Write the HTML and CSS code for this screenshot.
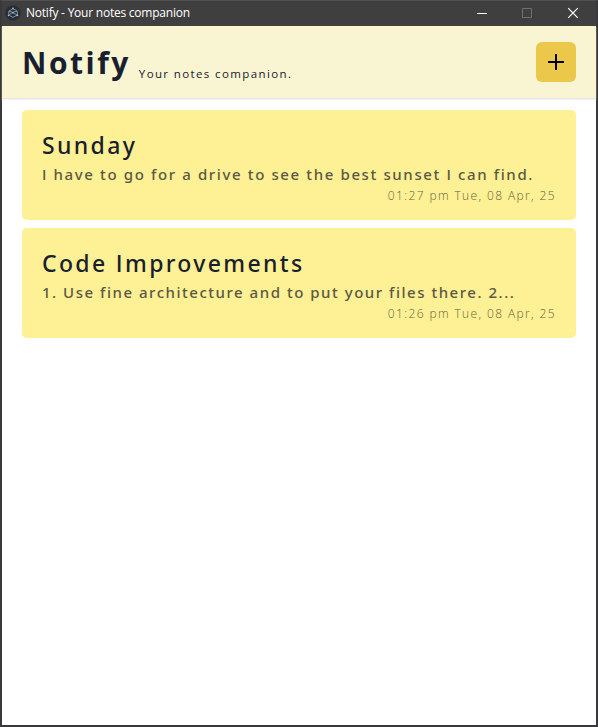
FILE: index.html
```html
<!DOCTYPE html>
<html lang="en">
<head>
<meta charset="utf-8">
<title>Notify - Your notes companion</title>
<link rel="stylesheet" href="styles.css">
</head>
<body>
<div class="window">
  <div class="titlebar">
    <svg class="app-icon" width="16" height="16" viewBox="0 0 16 16">
      <circle cx="8" cy="8" r="7.8" fill="#2b2e3a"/>
      <g fill="none" stroke="#8aa9b5" stroke-width=".8">
        <path d="M3.700 9.200V6.200L8 3.600l4.300 2.600v3.600L8 12.400l-3-1.700"/>
        <path d="M4 6.300c3 .2 5.800 1.800 7.900 4.100M12 6.200C9 6.400 6 8 4 10.200"/>
      </g>
      <g fill="#a9c8d2">
        <circle cx="8" cy="8" r=".8"/>
        <circle cx="3.700" cy="10.300" r=".9"/>
        <circle cx="12.300" cy="10.300" r=".9"/>
        <circle cx="8" cy="3.400" r=".8"/>
      </g>
    </svg>
    <span class="caption">Notify - Your notes companion</span>
    <div class="controls">
      <svg width="45" height="24" viewBox="0 0 45 24"><path d="M17 12.500h10" stroke="#fff"/></svg>
      <svg width="45" height="24" viewBox="0 0 45 24"><path d="M17.500 7.500h9v9h-9z" fill="none" stroke="#6e6e6e"/></svg>
      <svg width="45" height="24" viewBox="0 0 45 24"><path d="M18.200 7.200l9.600 9.600M27.800 7.200l-9.600 9.600" stroke="#fff" stroke-width="1.200"/></svg>
    </div>
  </div>
  <header class="header">
    <div class="brand">
      <h1 class="logo">Notify</h1>
      <p class="tagline">Your notes companion.</p>
    </div>
    <button class="add" aria-label="Add note">
      <svg width="16" height="16" viewBox="0 0 16 16"><path d="M0 8h16M8 0v16" stroke="#000" stroke-width="2"/></svg>
    </button>
  </header>
  <main class="notes">
    <article class="note">
      <h2 class="title">Sunday</h2>
      <p class="text wide">I have to go for a drive to see the best sunset I can find.</p>
      <time class="date">01:27 pm Tue, 08 Apr, 25</time>
    </article>
    <article class="note">
      <h2 class="title">Code Improvements</h2>
      <p class="text">1. Use fine architecture and to put your files there. 2...</p>
      <time class="date">01:26 pm Tue, 08 Apr, 25</time>
    </article>
  </main>
</div>
</body>
</html>
```
FILE: styles.css
```css
* { box-sizing: border-box; margin: 0; padding: 0; }
body {
  height: 727px;
  overflow: hidden;
  background: #fff;
  font-family: "Open Sans", "Noto Sans", sans-serif;
  color: #18202e;
}
.window {
  height: 727px;
  border: solid #39393b;
  border-width: 1px 2px 2px;
  border-top-color: #515151;
}
.titlebar {
  display: flex;
  height: 25px;
  padding-left: 3px;
  background: #3f3f3f;
  color: #fff;
}
.app-icon { margin-top: 4px; }
.caption {
  margin-left: 5px;
  font-size: 12px;
  line-height: 24px;
  letter-spacing: -0.23px;
  white-space: nowrap;
}
.controls { display: flex; margin: 0 1px 0 auto; }
.header {
  display: flex;
  align-items: center;
  justify-content: space-between;
  height: 73px;
  padding: 0 20px;
  background: #f9f5d3;
  border-bottom: 1px solid #e5e4e8;
  box-shadow: 0 1px 1px #f3f3f6;
}
.brand { display: flex; align-items: flex-end; gap: 8px; padding-top: 1px; white-space: nowrap; }
.logo { font-size: 30px; line-height: 36px; font-weight: 700; letter-spacing: 2.5px; }
.tagline { font-size: 11.5px; line-height: 14px; letter-spacing: 1.38px; }
.add {
  display: grid;
  place-items: center;
  width: 40px;
  height: 40px;
  border: 0;
  border-radius: 6px;
  background: #ebc84a;
}
.notes { display: flex; flex-direction: column; gap: 8px; padding: 11px 20px; }
.note {
  display: flex;
  flex-direction: column;
  height: 110px;
  padding: 20px;
  border-radius: 5px;
  background: #fef094;
  white-space: nowrap;
}
.title, .text { font-family: "Noto Sans", sans-serif; font-feature-settings: "salt"; }
.title { font-size: 23px; line-height: 30px; font-weight: 500; letter-spacing: 2.35px; }
.text { margin-top: 2px; font-size: 15px; line-height: 24px; font-weight: 500; letter-spacing: 1.52px; color: #5b5844; }
.wide { letter-spacing: 1.62px; }
.date { align-self: flex-end; font-size: 12px; line-height: 20px; font-weight: 300; letter-spacing: 1.38px; color: #686340; }
```
